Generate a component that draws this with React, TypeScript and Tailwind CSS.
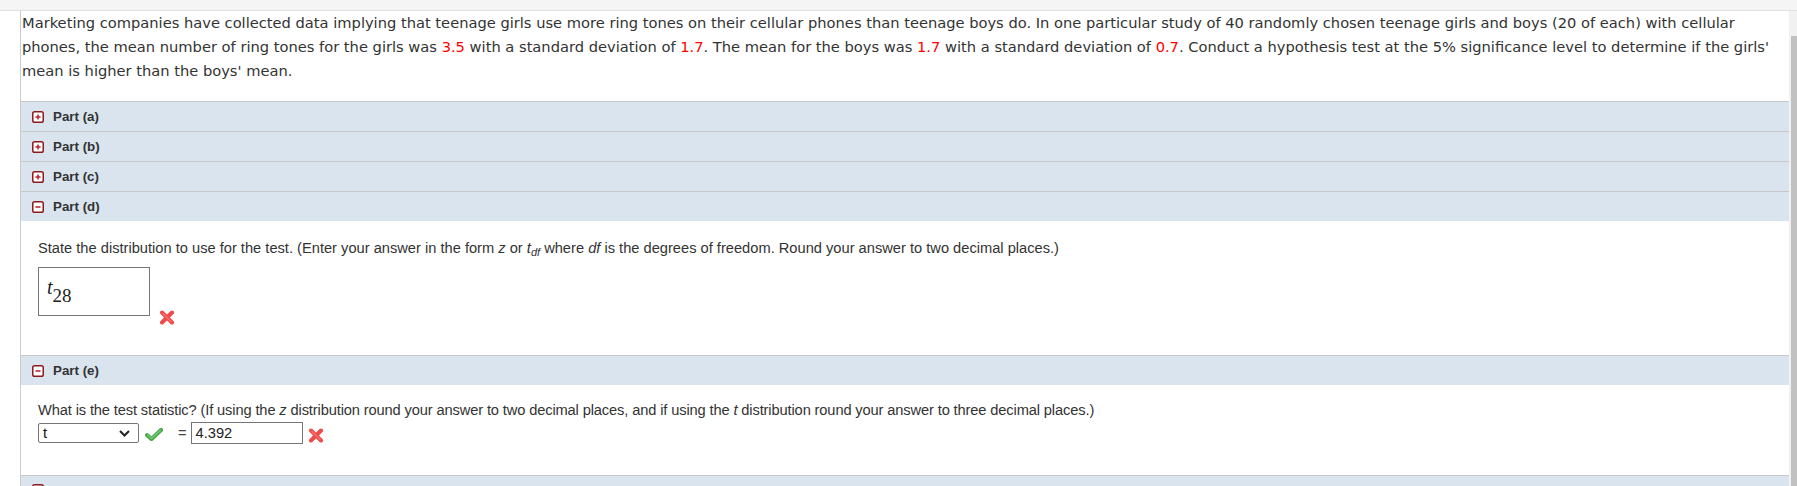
import React from "react"

function ToggleIcon({ open }: { open: boolean }) {
    return (
        <svg width="12" height="12" viewBox="0 0 12 12" className="shrink-0">
            <rect x="0.75" y="0.75" width="10.5" height="10.5" rx="1.8" fill="#fff" stroke="#8e1b1b" strokeWidth="1.5" />
            <line x1="3.5" y1="6" x2="8.5" y2="6" stroke="#c0282d" strokeWidth="1.6" />
            {!open && <line x1="6" y1="3.5" x2="6" y2="8.5" stroke="#c0282d" strokeWidth="1.6" />}
        </svg>
    )
}

function WrongMark() {
    return (
        <svg width="16" height="15" viewBox="0 0 16 15">
            <line x1="3" y1="2.5" x2="13" y2="12.5" stroke="#f04a4a" strokeWidth="4" strokeLinecap="round" />
            <line x1="13" y1="2.5" x2="3" y2="12.5" stroke="#f04a4a" strokeWidth="4" strokeLinecap="round" />
            <line x1="4" y1="3.5" x2="12" y2="11.5" stroke="#f87070" strokeWidth="1.5" strokeLinecap="round" />
        </svg>
    )
}

function RightMark() {
    return (
        <svg width="18" height="13" viewBox="0 0 18 13">
            <path d="M2 7 L6.5 11 L16 2" fill="none" stroke="#46a446" strokeWidth="4" strokeLinecap="round" strokeLinejoin="round" />
            <path d="M2.5 7 L6.5 10.4 L15.5 2.4" fill="none" stroke="#74c874" strokeWidth="1.6" strokeLinecap="round" strokeLinejoin="round" />
        </svg>
    )
}

function PartHeader({ label, open = false }: { label: string; open?: boolean }) {
    return (
        <div className="h-[30px] flex items-center gap-[9px] pl-[11px] bg-[#d9e4ee] border-t border-[#c8c8c8]">
            <ToggleIcon open={open} />
            <span className="text-[13.33px] font-bold text-[#333]">{label}</span>
        </div>
    )
}

const red = "text-[#ff0000]"

export default function App() {
    return (
        <div className="w-full h-[486px] overflow-hidden bg-white flex flex-col">
            {/* top strip */}
            <div className="h-[11px] shrink-0 bg-[#f5f5f5] border-b border-[#e0e0e0]" />

            <div className="flex flex-1 min-h-0">
                <div className="w-[20px] shrink-0" />

                <div className="flex-1 border-l border-[#cccccc] min-w-0">
                    <p
                        className="pl-[1px] text-[14.67px] leading-[24px] text-[#333]"
                        style={{ fontFamily: '"DejaVu Sans", Verdana, sans-serif' }}
                    >
                        Marketing companies have collected data implying that teenage girls use more ring tones on their cellular phones than teenage boys do. In one particular study of 40 randomly chosen teenage girls and boys (20 of each) with cellular phones, the mean number of ring tones for the girls was <span className={red}>3.5</span> with a standard deviation of <span className={red}>1.7</span>. The mean for the boys was <span className={red}>1.7</span> with a standard deviation of <span className={red}>0.7</span>. Conduct a hypothesis test at the 5% significance level to determine if the girls' mean is higher than the boys' mean.
                    </p>

                    <div className="mt-[18px] font-['Liberation_Sans',Arial,sans-serif]">
                        <PartHeader label="Part (a)" />
                        <PartHeader label="Part (b)" />
                        <PartHeader label="Part (c)" />
                        <PartHeader label="Part (d)" open />

                        {/* Part (d) body */}
                        <div className="h-[134px] pl-[17px] pt-[18px] text-[14.67px] text-[#333]">
                            <p className="leading-[18px]">
                                State the distribution to use for the test. (Enter your answer in the form <i>z</i> or <i>t</i>
                                <sub className="italic text-[11px]">df</sub> where <i>df</i> is the degrees of freedom. Round your answer to two decimal places.)
                            </p>
                            <div className="flex items-start mt-[10px]">
                                <div className="w-[112px] h-[49px] border border-[#777] pl-[8px] pt-[9px] font-['Liberation_Serif',serif] text-[#222]">
                                    <span className="italic text-[20px] leading-none">t</span>
                                    <span className="text-[19px] leading-none relative top-[8px]">28</span>
                                </div>
                                <div className="ml-[9px] mt-[43px]">
                                    <WrongMark />
                                </div>
                            </div>
                        </div>

                        <PartHeader label="Part (e)" open />

                        {/* Part (e) body */}
                        <div className="h-[90px] pl-[17px] pt-[16px] text-[14.67px] text-[#333]">
                            <p className="leading-[18px] tracking-[-0.13px]">
                                What is the test statistic? (If using the <i>z</i> distribution round your answer to two decimal places, and if using the <i>t</i> distribution round your answer to three decimal places.)
                            </p>
                            <div className="flex items-center mt-[3px] h-[22px]">
                                <div className="w-[101px] h-[20px] border border-[#767676] rounded-[2px] flex items-center justify-between pl-[4px] pr-[8px] text-[14.67px] text-[#111]">
                                    <span>t</span>
                                    <svg width="11" height="7" viewBox="0 0 11 7">
                                        <path d="M1 1 L5.5 5.5 L10 1" fill="none" stroke="#222" strokeWidth="2" />
                                    </svg>
                                </div>
                                <div className="ml-[6px] mt-[3px]">
                                    <RightMark />
                                </div>
                                <span className="ml-[15px] text-[14.67px] text-[#444]">=</span>
                                <div className="ml-[4px] w-[112px] h-[22px] border border-[#767676] pl-[4px] flex items-center text-[14.67px] text-[#222]">
                                    4.392
                                </div>
                                <div className="ml-[5px] mt-[4px]">
                                    <WrongMark />
                                </div>
                            </div>
                        </div>

                        {/* next part header, only its top edge is in view */}
                        <div className="h-[30px] pl-[11px] pt-[8px] bg-[#d9e4ee] border-t border-[#c8c8c8]">
                            <ToggleIcon open={false} />
                        </div>
                    </div>
                </div>

                {/* scrollbar */}
                <div className="w-[8px] shrink-0 bg-[#f1f1f1] flex flex-col">
                    <div className="h-[25px]" />
                    <div className="ml-[2px] w-[6px] flex-1 bg-[#c1c1c1]" />
                </div>
            </div>
        </div>
    )
}
